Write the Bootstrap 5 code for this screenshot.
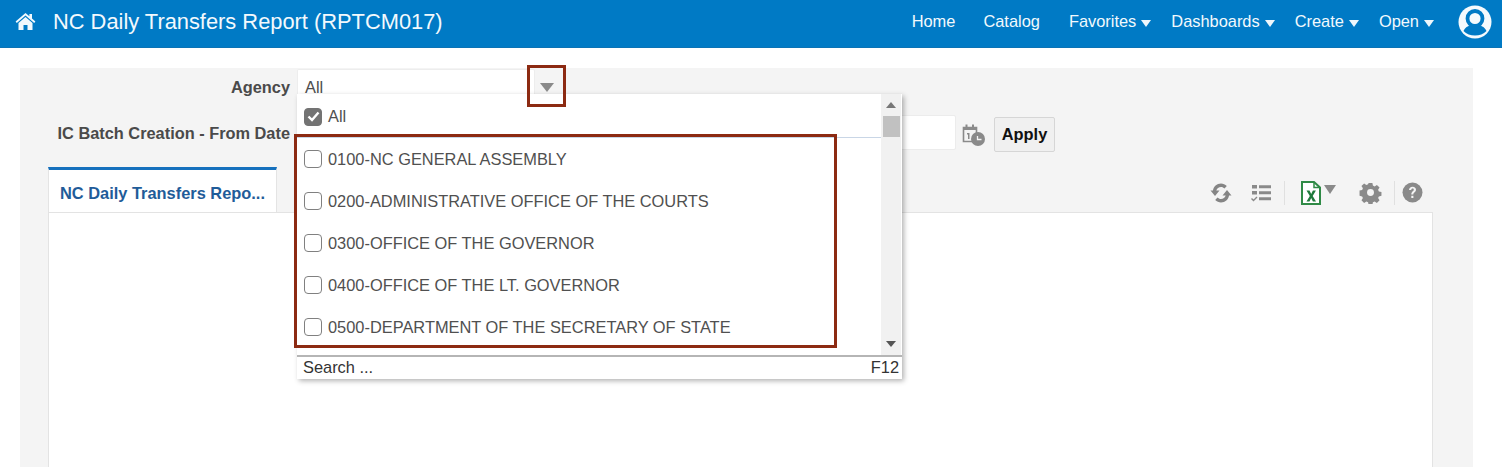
<!DOCTYPE html>
<html lang="en">
<head>
<meta charset="utf-8">
<title>NC Daily Transfers Report</title>
<link rel="stylesheet" href="https://cdn.jsdelivr.net/npm/bootstrap@5.3.0/dist/css/bootstrap.min.css">
<style>
html,body{height:467px;overflow:hidden;background:#fff;font-family:"Liberation Sans",Arial,sans-serif;color:#404040}
.topbar{height:48px;background:#007ac5;color:#fff;padding:0 10px 4px 15px;border-bottom:1px solid #0b73b5}
.top-title{font-size:21.85px;margin-left:17px;color:#f2f9fd;line-height:1}
.top-links{font-size:16.4px;color:#f2f9fd;margin-right:24px;gap:20px}
.top-links .plain{margin-right:8px}
.top-links .plain-b{margin-right:9px}
.tri{display:inline-block;width:0;height:0;border-left:5px solid transparent;border-right:5px solid transparent;border-top:7px solid #eef7fc;vertical-align:0;margin-left:5px}
.stage{padding:20px 29px 0 20px;height:419px}
.panel-area{background:#f4f4f4;height:399px;position:relative}
.label-col{width:271px;text-align:right;font-weight:700;font-size:16.35px;color:#4a4a4a;flex:none;padding-right:1px}
.lab-a{padding-top:6px}
.lab-b{padding-top:6px}
.row-a{height:38px;padding-top:1px}
.field-a{width:238px;height:25px;margin-left:6px;background:#fff;border:1px solid #ededed;border-bottom:0;border-radius:2px 2px 0 0;font-size:16.4px;padding:8px 0 0 7px;line-height:1.1;color:#4d4d4d}
.row-b{margin-top:9px;height:35px}
.field-b{width:659px;height:35px;margin-left:6px;background:#fff;border:1px solid #ececec;border-radius:2px}
.caldate{margin-left:6px;margin-top:5px;align-self:center}
.apply-btn{margin-left:8px;margin-top:2px;width:61px;height:35px;padding:0;font-size:16.4px;font-weight:700;color:#111;background:#f0f0f0;border:1px solid #d6d6d6;border-radius:2px}
.tab-row{margin:17px 40px 0 28px;height:45px}
.tab-on{width:229px;height:45px;background:#fff;border-top:3px solid #1570bd;border-left:1px solid #e4e4e4;border-right:1px solid #e4e4e4;color:#1f5c99;font-weight:700;font-size:16.4px;padding:14px 0 0 11px;white-space:nowrap;line-height:1.1}
.tools{padding:6px 10px 0 0;height:45px}
.tool-sep{width:1px;height:24px;background:#e0e0e0}
.gap-a{margin-left:18px}
.sep-a{margin:0 16px 0 12px}
.tool-tri{margin:0 23px 6px 3px}
.sep-b{margin:0 7px 0 12px}
.content-box{margin:0 40px 0 28px;height:255px;background:#fff;border:1px solid #e3e3e3;border-bottom:0}
.drop{position:absolute;left:277px;top:26px;width:605px;height:285px;background:#fff;box-shadow:2px 2px 5px rgba(0,0,0,.3);z-index:5}
.drop-list{height:261px}
.drop-items{width:584px;flex:none}
.opt{height:42px;font-size:16.4px;padding-left:7px;gap:6px;color:#505050;white-space:nowrap}
.opt-all{height:44px;padding-top:2px;border-bottom:1px solid #c9d6e6}
.cbx{width:18px;height:18px;border:1.500px solid #808080;border-radius:4px;background:#fff;flex:none}
.cbx-on{background:#737373;border-color:#737373;display:flex;align-items:center;justify-content:center}
.sbar{width:20px;background:#f1f1f1;position:relative}
.sbar .thumb{height:21px;width:17px;margin:0 auto;background:#c1c1c1}
.sbtn{height:22px;display:flex;align-items:center;justify-content:center}
.sgrow{flex:1}
.stri-u{width:0;height:0;border-left:5px solid transparent;border-right:5px solid transparent;border-bottom:6px solid #777}
.stri-d{width:0;height:0;border-left:5px solid transparent;border-right:5px solid transparent;border-top:6px solid #555}
.drop-foot{height:24px;border-top:2px solid #b5b5b5;font-size:16.4px;padding:1px 3px 0 6px;color:#333;line-height:1.2}
.mark-a{position:absolute;left:507px;top:-3px;width:39px;height:42px;border:3px solid #8c2a12;z-index:6;display:flex;align-items:center;justify-content:center}
.mark-b{position:absolute;left:274px;top:66px;width:543px;height:214px;border:3px solid #8c2a12;z-index:6}
.field-tri{width:0;height:0;border-left:7px solid transparent;border-right:7px solid transparent;border-top:9px solid #8a8a8a;margin-top:2px}
</style>
</head>
<body>
<nav class="topbar d-flex align-items-center justify-content-between">
  <div class="d-flex align-items-center">
    <svg width="21" height="19" viewBox="0 0 21 19" fill="#f2f9fd" aria-hidden="true"><path d="M10.500 1 .6 9.600l1.200 1.400 8.700-7.500 8.700 7.500 1.200-1.400-3.400-3V2h-2.600v2.300z"/><path d="M10.500 5 3.500 11v7h5v-5h4v5h5v-7z"/></svg>
    <span class="top-title">NC Daily Transfers Report (RPTCM017)</span>
  </div>
  <div class="d-flex align-items-center">
    <div class="top-links d-flex align-items-center">
      <span class="plain">Home</span><span class="plain-b">Catalog</span>
      <span>Favorites<i class="tri"></i></span>
      <span>Dashboards<i class="tri"></i></span>
      <span>Create<i class="tri"></i></span>
      <span>Open<i class="tri"></i></span>
    </div>
    <svg width="34" height="34" viewBox="0 0 34 34" aria-hidden="true"><circle cx="17" cy="17" r="16.500" fill="#f5fafd"/><circle cx="17" cy="13.500" r="7.500" fill="none" stroke="#007ac5" stroke-width="3.800"/><path d="M5.500 26c2.500-5 6.500-5.500 6.500-5.500 3 1.500 7 1.500 10 0 0 0 4 .5 6.500 5.500-3 3-7 4.500-11.500 4.500S8.500 29 5.500 26z" fill="#007ac5"/></svg>
  </div>
</nav>
<main class="stage">
  <div class="panel-area">
    <div class="row-a d-flex">
      <div class="label-col lab-a">Agency</div>
      <div class="field-a">All</div>
    </div>
    <div class="row-b d-flex">
      <div class="label-col lab-b">IC Batch Creation - From Date</div>
      <div class="field-b"></div>
      <svg class="caldate" width="24" height="24" viewBox="0 0 24 24" aria-hidden="true"><path d="M1.500 4.500h13v14h-13z" fill="none" stroke="#8a8a8a" stroke-width="1.600"/><path d="M1 4h14v3H1zM3.500 1.500h2v3h-2zM10 1.500h2v3h-2z" fill="#8a8a8a"/><path d="M5 10h2.500v6H6v-4.500H5z" fill="#8a8a8a"/><circle cx="16" cy="16" r="7" fill="#8a8a8a"/><path d="M15.500 13v3.500h4" fill="none" stroke="#f4f4f4" stroke-width="1.300"/></svg>
      <button type="button" class="btn apply-btn">Apply</button>
    </div>
    <div class="tab-row d-flex justify-content-between">
      <div class="tab-on">NC Daily Transfers Repo...</div>
      <div class="tools d-flex align-items-center">
        <svg width="22" height="22" viewBox="0 0 22 22" fill="#858585" aria-hidden="true"><path d="M11 1.500c-4.200 0-7.500 3-8 7L.5 8.500l4.500 5.500 4.500-5.500H6.300C7 6.300 8.800 5 11 5c1.400 0 2.600.6 3.500 1.500l2.300-2.500C15.200 2.500 13.200 1.500 11 1.500z"/><path d="M11 20.500c4.200 0 7.500-3 8-7h2.500L17 8l-4.500 5.500h3.200C15 15.700 13.200 17 11 17c-1.400 0-2.600-.6-3.500-1.500L5.200 18c1.600 1.500 3.600 2.500 5.800 2.500z"/></svg>
        <svg class="gap-a" width="22" height="20" viewBox="0 0 22 20" fill="#8a8a8a" aria-hidden="true"><path d="M2 2h5v3.500H2zM9 2.300h12v3H9zM2 8h5v3.500H2zM9 8.300h12v3H9zM9 14.300h12v3H9z"/><path d="M1.500 15.500l2 2 3.500-3.500" fill="none" stroke="#8a8a8a" stroke-width="1.400"/></svg>
        <span class="tool-sep sep-a"></span>
        <svg width="20" height="24" viewBox="0 0 20 24" aria-hidden="true"><path d="M1 1h12l6 5.500V23H1z" fill="#fff" stroke="#2f8a46" stroke-width="2"/><path d="M13 1v5.500h6" fill="none" stroke="#2f8a46" stroke-width="1.500"/><path d="M5.500 9.500h3l1.700 3.400 1.700-3.400h3l-3.200 5.500 3.300 5.500h-3.100l-1.700-3.400-1.700 3.400h-3l3.300-5.500z" fill="#1f7a3c"/></svg>
        <svg class="tool-tri" width="12" height="10" viewBox="0 0 12 10" fill="#8a8a8a" aria-hidden="true"><path d="M0 0h12L6 9z"/></svg>
        <svg width="23" height="23" viewBox="0 0 24 24" aria-hidden="true"><path d="M9.800 1h4.400l.6 3 2 .9 2.600-1.700 3.100 3.100-1.700 2.600.9 2 3 .6v4.400l-3 .6-.9 2 1.700 2.600-3.100 3.100-2.600-1.700-2 .9-.6 3H9.800l-.6-3-2-.9-2.600 1.700-3.100-3.100 1.700-2.600-.9-2-3-.6V9.800l3-.6.900-2L1.500 4.600l3.100-3.100 2.600 1.700 2-.9z" fill="#8a8a8a" transform="translate(1.200 1.200) scale(.9)"/><circle cx="12" cy="12" r="3.600" fill="#f4f4f4"/></svg>
        <span class="tool-sep sep-b"></span>
        <svg width="21" height="21" viewBox="0 0 21 21" aria-hidden="true"><circle cx="10.500" cy="10.500" r="10" fill="#8a8a8a"/><path d="M7 8c0-2 1.500-3.300 3.600-3.300S14 6 14 7.800c0 2.400-2.700 2.600-2.700 4.700H9.300c0-3 2.500-3.200 2.500-4.700 0-.7-.5-1.200-1.200-1.200-.8 0-1.300.6-1.400 1.400zM9.300 13.700h2.100v2.200H9.300z" fill="#f4f4f4"/></svg>
      </div>
    </div>
    <div class="content-box"></div>

    <div class="mark-a"><span class="field-tri"></span></div>
    <div class="mark-b"></div>
    <div class="drop d-flex flex-column">
      <div class="drop-list d-flex">
        <div class="drop-items">
          <div class="opt opt-all d-flex align-items-center"><span class="cbx cbx-on"><svg width="13" height="11" viewBox="0 0 13 11" aria-hidden="true"><path d="M1.500 5.500l3.500 3.500 6.500-7.500" fill="none" stroke="#fff" stroke-width="2.400"/></svg></span>All</div>
          <div class="opt d-flex align-items-center"><span class="cbx"></span>0100-NC GENERAL ASSEMBLY</div>
          <div class="opt d-flex align-items-center"><span class="cbx"></span>0200-ADMINISTRATIVE OFFICE OF THE COURTS</div>
          <div class="opt d-flex align-items-center"><span class="cbx"></span>0300-OFFICE OF THE GOVERNOR</div>
          <div class="opt d-flex align-items-center"><span class="cbx"></span>0400-OFFICE OF THE LT. GOVERNOR</div>
          <div class="opt d-flex align-items-center"><span class="cbx"></span>0500-DEPARTMENT OF THE SECRETARY OF STATE</div>
        </div>
        <div class="sbar d-flex flex-column">
          <div class="sbtn"><span class="stri-u"></span></div>
          <div class="thumb"></div>
          <div class="sgrow"></div>
          <div class="sbtn"><span class="stri-d"></span></div>
        </div>
      </div>
      <div class="drop-foot d-flex justify-content-between"><span>Search ...</span><span>F12</span></div>
    </div>
  </div>
</main>
</body>
</html>
